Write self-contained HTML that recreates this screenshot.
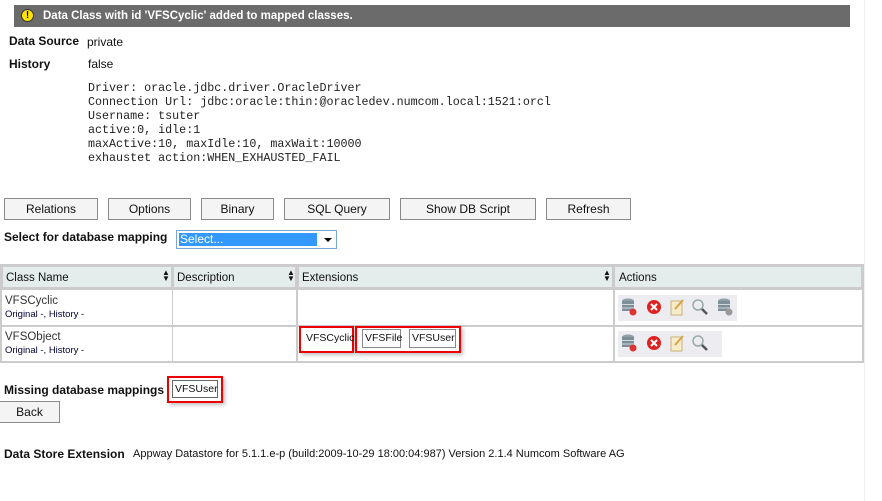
<!DOCTYPE html>
<html><head><meta charset="utf-8"><style>
*{margin:0;padding:0;box-sizing:border-box}
body{width:882px;height:501px;background:#fff;position:relative;overflow:hidden;font-family:"Liberation Sans",Arial,sans-serif;font-size:11px;color:#111}
.a{position:absolute;white-space:nowrap}
.b{font-weight:bold}
.mono{font-family:"Liberation Mono",monospace;font-size:11.7px;line-height:14px;white-space:pre;color:#222}
.btn{position:absolute;height:22px;border:1px solid #8a8a8a;background:#f4f4f4;text-align:center;line-height:20px;font-size:12px}
.cell{position:absolute;border:1px solid #ccc}
.hd{background:#e4ecec}
.tag{position:absolute;border:1px solid #888;background:#fff;height:19px;line-height:17px;padding:0 2px;font-size:10.5px}
.red{position:absolute;border:2px solid #e00;box-shadow:2px 2px 4px rgba(0,0,0,.25)}
</style></head><body>
<div class="a" style="left:864px;top:0;width:1px;height:501px;background:#eee"></div>
<div class="a" style="left:14px;top:5px;width:836px;height:22px;background:#6b6b6b"></div>
<div class="a" style="left:21px;top:9px;width:13px;height:13px;border-radius:50%;background:#ffe200;border:1px solid #333;font:bold 10px/11px 'Liberation Sans';text-align:center;color:#000">!</div>
<div class="a b" style="left:43px;top:10px;color:#fff;font-size:11.5px">Data Class with id 'VFSCyclic' added to mapped classes.</div>
<div class="a b" style="left:9px;top:34px;font-size:12px">Data Source</div>
<div class="a" style="left:87px;top:35px;font-size:12px">private</div>
<div class="a b" style="left:9px;top:57px;font-size:12px">History</div>
<div class="a" style="left:88px;top:57px;font-size:12px">false</div>
<div class="a mono" style="left:88px;top:81px">Driver: oracle.jdbc.driver.OracleDriver
Connection Url: jdbc:oracle:thin:@oracledev.numcom.local:1521:orcl
Username: tsuter
active:0, idle:1
maxActive:10, maxIdle:10, maxWait:10000
exhaustet action:WHEN_EXHAUSTED_FAIL</div>
<div class="btn" style="left:4px;top:198px;width:94px">Relations</div>
<div class="btn" style="left:108px;top:198px;width:83px">Options</div>
<div class="btn" style="left:201px;top:198px;width:73px">Binary</div>
<div class="btn" style="left:284px;top:198px;width:106px">SQL Query</div>
<div class="btn" style="left:400px;top:198px;width:136px">Show DB Script</div>
<div class="btn" style="left:546px;top:198px;width:85px">Refresh</div>
<div class="a b" style="left:4px;top:230px;font-size:12px">Select for database mapping</div>
<div class="a" style="left:176px;top:230px;width:161px;height:19px;border:1px solid #7aa7d8;background:#fff"></div>
<div class="a" style="left:179px;top:233px;width:138px;height:13px;background:#3399ff;color:#fff;line-height:13px;padding-left:1px;font-size:12px">Select...</div>
<div class="a" style="left:324px;top:238px;width:0;height:0;border-left:4px solid transparent;border-right:4px solid transparent;border-top:4px solid #000"></div>
<div class="a" style="left:0;top:264px;width:864px;height:99px;border:1px solid #ccc;background:#ccc"></div>
<div class="cell hd" style="left:2px;top:266px;width:170px;height:22px"></div>
<div class="cell hd" style="left:173px;top:266px;width:123px;height:22px"></div>
<div class="cell hd" style="left:298px;top:266px;width:315px;height:22px"></div>
<div class="cell hd" style="left:614px;top:266px;width:248px;height:22px"></div>
<div class="a" style="left:6px;top:272px;font-size:11.5px">Class Name</div>
<div class="a" style="left:162px;top:270px;font-size:8px;line-height:6px">▲<br>▼</div>
<div class="a" style="left:177px;top:272px;font-size:11.5px">Description</div>
<div class="a" style="left:287px;top:270px;font-size:8px;line-height:6px">▲<br>▼</div>
<div class="a" style="left:302px;top:272px;font-size:11.5px">Extensions</div>
<div class="a" style="left:603px;top:270px;font-size:8px;line-height:6px">▲<br>▼</div>
<div class="a" style="left:619px;top:272px;font-size:11.5px">Actions</div>
<div class="a" style="left:2px;top:290px;width:170px;height:35px;background:#fff"></div>
<div class="a" style="left:173px;top:290px;width:123px;height:35px;background:#fff"></div>
<div class="a" style="left:298px;top:290px;width:315px;height:35px;background:#fff"></div>
<div class="a" style="left:615px;top:290px;width:247px;height:35px;background:#fff"></div>
<div class="a" style="left:2px;top:327px;width:170px;height:34px;background:#fff"></div>
<div class="a" style="left:173px;top:327px;width:123px;height:34px;background:#fff"></div>
<div class="a" style="left:298px;top:327px;width:315px;height:34px;background:#fff"></div>
<div class="a" style="left:615px;top:327px;width:247px;height:34px;background:#fff"></div>
<div class="a" style="left:5px;top:295px;font-size:11.5px;color:#333">VFSCyclic</div>
<div class="a" style="left:5px;top:309px;font-size:9.5px;color:#003">Original -, History -</div>
<div class="a" style="left:5px;top:331px;font-size:11.5px;color:#333">VFSObject</div>
<div class="a" style="left:5px;top:345px;font-size:9.5px;color:#003">Original -, History -</div>
<div class="red" style="left:299px;top:326px;width:55px;height:27px"></div>
<div class="a" style="left:306px;top:332px;font-size:10.5px">VFSCyclic</div>
<div class="red" style="left:355px;top:326px;width:106px;height:27px"></div>
<div class="tag" style="left:362px;top:329px;width:39px">VFSFile</div>
<div class="tag" style="left:409px;top:329px;width:47px">VFSUser</div>
<div class="a" style="left:618px;top:295px;width:119px;height:26px;background:#ececf1"></div>
<div class="a" style="left:618px;top:331px;width:104px;height:26px;background:#ececf1"></div>
<svg class="a" style="left:618px;top:295px" width="120" height="62">
<g id="r">
<ellipse cx="10" cy="6" rx="6" ry="2.5" fill="#8fa0a8"/><rect x="4" y="6" width="12" height="10" fill="#7d8e98"/><path d="M4 9.5h12M4 13h12" stroke="#cfd8dc"/><circle cx="15" cy="17" r="3.5" fill="#d33"/>
<circle cx="36" cy="12" r="7" fill="#d22"/><path d="M33 9l6 6M39 9l-6 6" stroke="#fff" stroke-width="2"/>
<rect x="53" y="6" width="11" height="14" fill="#f6ecc8" stroke="#c8b27a"/><path d="M57 14l8-9" stroke="#d9a24a" stroke-width="2"/>
<circle cx="80" cy="10" r="5" fill="none" stroke="#9aa" stroke-width="1.5"/><path d="M84 14l5 5" stroke="#555" stroke-width="2.5"/>
</g>
<use href="#r" y="36"/>
<ellipse cx="106" cy="6" rx="6" ry="2.5" fill="#8fa0a8"/><rect x="100" y="6" width="12" height="10" fill="#7d8e98"/><path d="M100 9.5h12M100 13h12" stroke="#cfd8dc"/><circle cx="111" cy="17" r="3.5" fill="#999"/>
</svg>
<div class="a b" style="left:4px;top:383px;font-size:12px">Missing database mappings</div>
<div class="red" style="left:167px;top:376px;width:56px;height:27px"></div>
<div class="tag" style="left:172px;top:380px;width:46px;height:18px;line-height:16px;border-color:#666">VFSUser</div>
<div class="btn" style="left:-1px;top:401px;width:61px">Back</div>
<div class="a b" style="left:4px;top:447px;font-size:12px">Data Store Extension</div>
<div class="a" style="left:133px;top:448px;font-size:11px">Appway Datastore for 5.1.1.e-p (build:2009-10-29 18:00:04:987) Version 2.1.4 Numcom Software AG</div>
</body></html>
